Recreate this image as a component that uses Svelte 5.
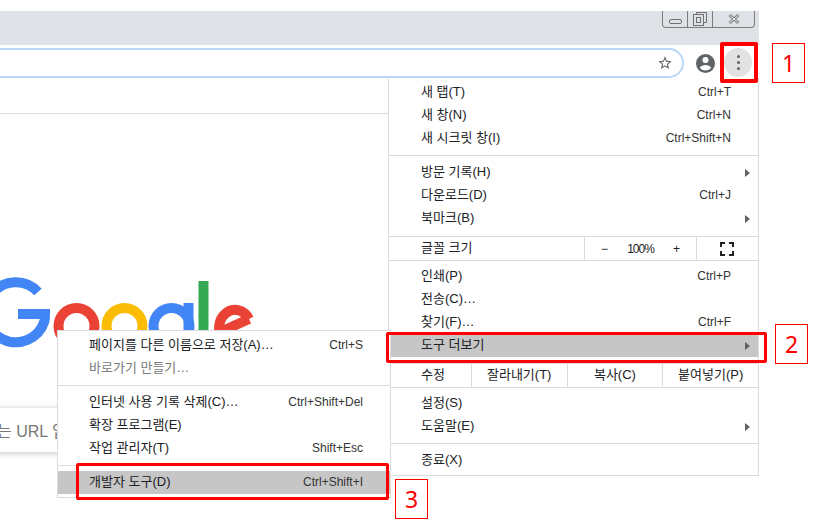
<script lang="ts">
  const mainMenu = [
    { rows: [
      { label: '새 탭(T)', accel: 'Ctrl+T' },
      { label: '새 창(N)', accel: 'Ctrl+N' },
      { label: '새 시크릿 창(I)', accel: 'Ctrl+Shift+N' },
    ] },
    { rows: [
      { label: '방문 기록(H)', more: true },
      { label: '다운로드(D)', accel: 'Ctrl+J' },
      { label: '북마크(B)', more: true },
    ] },
    { zoom: true },
    { rows: [
      { label: '인쇄(P)', accel: 'Ctrl+P' },
      { label: '전송(C)…' },
      { label: '찾기(F)…', accel: 'Ctrl+F' },
      { label: '도구 더보기', more: true, active: true },
    ] },
    { edit: ['잘라내기(T)', '복사(C)', '붙여넣기(P)'] },
    { rows: [
      { label: '설정(S)' },
      { label: '도움말(E)', more: true },
    ] },
    { rows: [{ label: '종료(X)' }] },
  ];

  const subMenu = [
    [
      { label: '페이지를 다른 이름으로 저장(A)…', accel: 'Ctrl+S' },
      { label: '바로가기 만들기…', disabled: true },
    ],
    [
      { label: '인터넷 사용 기록 삭제(C)…', accel: 'Ctrl+Shift+Del' },
      { label: '확장 프로그램(E)' },
      { label: '작업 관리자(T)', accel: 'Shift+Esc' },
    ],
    [{ label: '개발자 도구(D)', accel: 'Ctrl+Shift+I', active: true }],
  ];

  const isStrip = (group) => group.zoom || group.edit;
</script>

{#snippet row(item)}
  <div class="row" class:active={item.active} class:disabled={item.disabled}>
    <span class="label">{item.label}</span>
    {#if item.accel}<span class="accel">{item.accel}</span>{/if}
    {#if item.more}<span class="arrow"></span>{/if}
  </div>
{/snippet}

<div class="window">
  <div class="titlebar">
    <div class="caption">
      <span class="cap min"><svg width="13" height="5" viewBox="0 0 13 5"><rect x="0.5" y="0.5" width="12" height="4" rx="1.5" fill="none" stroke="#6f6f6f"/></svg></span>
      <span class="cap restore"><svg width="14" height="14" viewBox="0 0 14 14"><path d="M3.500 2.500v-2h10v10h-3" fill="none" stroke="#6f6f6f"/><rect x="0.500" y="2.500" width="10" height="11" fill="none" stroke="#6f6f6f"/><rect x="3.500" y="5.500" width="4" height="5" fill="none" stroke="#6f6f6f"/></svg></span>
      <span class="cap close"><svg width="12" height="10" viewBox="0 0 12 10"><path d="M1.500 1l9 8M10.500 1l-9 8" stroke="#7f7f7f" stroke-width="3" fill="none"/><path d="M1.500 1l9 8M10.500 1l-9 8" stroke="#eceef0" stroke-width="1" fill="none"/></svg></span>
    </div>
  </div>

  <div class="toolbar">
    <div class="omnibox">
      <svg class="star" width="16" height="16" viewBox="0 0 24 24"><path d="M22 9.240l-7.190-.620L12 2 9.190 8.630 2 9.240l5.460 4.730L5.820 21 12 17.270 18.180 21l-1.630-7.030L22 9.240zM12 15.400l-3.760 2.270 1-4.280-3.320-2.880 4.380-.380L12 6.100l1.710 4.040 4.380.380-3.320 2.880 1 4.280L12 15.400z" fill="#5f6368"/></svg>
    </div>
    <svg class="avatar" width="19" height="19" viewBox="0 0 20 20"><path fill-rule="evenodd" d="M10 0a10 10 0 1 0 0 20 10 10 0 0 0 0-20zm0 3.200a3.200 3.200 0 1 1 0 6.400 3.200 3.200 0 0 1 0-6.400zM10 17.400a7.600 7.600 0 0 1-6-3c.900-1.800 4-2.700 6-2.700s5.100.900 6 2.700a7.600 7.600 0 0 1-6 3z" fill="#5f6368"/></svg>
    <div class="kebab"><i></i><i></i><i></i></div>
  </div>

  <div class="page">
    <div class="page-head"></div>
    <svg class="logo" width="270" height="100" viewBox="0 0 270 100">
      <g fill="none" stroke-width="10">
        <path d="M38 15a30 30 0 1 0 6.500 29c.500-2 .500-4.500.500-7H18" stroke="#4285f4"/>
        <circle cx="76.500" cy="49" r="18" stroke="#ea4335"/>
        <circle cx="124.500" cy="49" r="18" stroke="#fbbc05"/>
        <circle cx="171.500" cy="49" r="18" stroke="#4285f4"/>
        <path d="M188.500 26v50" stroke="#4285f4"/>
        <path d="M203.500 4v70" stroke="#34a853"/>
        <path d="M249 42A16 18 0 1 0 246 64" stroke="#ea4335"/>
        <path d="M218 56l31-14" stroke="#ea4335"/>
      </g>
    </svg>
    <div class="searchbox"><span>는 URL 입력</span></div>
  </div>

  <div class="menu main">
    {#each mainMenu as group, i}
      {#if i > 0}
        <div class="sep" class:before-strip={isStrip(group)} class:after-strip={isStrip(mainMenu[i - 1])}></div>
      {/if}
      {#if group.zoom}
        <div class="strip">
          <span class="label strip-label">글꼴 크기</span>
          <div class="zoom-ctl">
            <span>−</span><span class="pct">100%</span><span>+</span>
          </div>
          <div class="fullscreen">
            <svg width="14" height="14" viewBox="0 0 14 14"><path d="M1 5V1h4M9 1h4v4M13 9v4H9M5 13H1V9" fill="none" stroke="#222" stroke-width="2"/></svg>
          </div>
        </div>
      {:else if group.edit}
        <div class="strip edit">
          <span class="label strip-label">수정</span>
          {#each group.edit as cmd}<span class="label cmd">{cmd}</span>{/each}
        </div>
      {:else}
        <div class="group">
          {#each group.rows as item}{@render row(item)}{/each}
        </div>
      {/if}
    {/each}
  </div>

  <div class="menu sub">
    {#each subMenu as group, i}
      {#if i > 0}<div class="sep"></div>{/if}
      <div class="group">
        {#each group as item}{@render row(item)}{/each}
      </div>
    {/each}
  </div>

  <div class="mark mark-1"></div>
  <div class="mark mark-2"></div>
  <div class="mark mark-3"></div>
  <div class="tag tag-1">1</div>
  <div class="tag tag-2">2</div>
  <div class="tag tag-3">3</div>
</div>

<style>
  :global(body) {
    margin: 0;
    background: #fff;
  }

  .window {
    position: relative;
    width: 813px;
    height: 527px;
    padding-top: 11px;
    box-sizing: border-box;
    overflow: hidden;
    font-family: "Liberation Sans", "Noto Sans CJK KR", sans-serif;
    font-size: 12px;
    color: #202124;
  }

  .titlebar {
    width: 759px;
    height: 34px;
    background: #dee1e6;
    display: flex;
    justify-content: flex-end;
  }

  .caption {
    display: flex;
    height: 16px;
    margin-right: 4px;
    border: 1px solid #7c7c7c;
    border-top: 0;
    border-radius: 0 0 4px 4px;
  }

  .cap {
    display: flex;
    align-items: center;
    justify-content: center;
  }

  .min {
    width: 24px;
    border-right: 1px solid #7c7c7c;
    padding-top: 5px;
    box-sizing: content-box;
  }

  .restore {
    width: 24px;
    border-right: 1px solid #7c7c7c;
  }

  .close {
    width: 41px;
  }

  .toolbar {
    width: 759px;
    height: 33px;
    box-sizing: border-box;
    padding-top: 3px;
    display: flex;
    align-items: flex-start;
  }

  .omnibox {
    box-sizing: border-box;
    flex: none;
    width: 704px;
    height: 30px;
    margin-left: -20px;
    border: 2px solid #bad6f8;
    border-radius: 15px;
    display: flex;
    align-items: center;
    justify-content: flex-end;
    padding-right: 9px;
  }

  .avatar {
    flex: none;
    margin: 6px 0 0 12px;
  }

  .kebab {
    flex: none;
    width: 28px;
    height: 29px;
    margin-left: 9px;
    border-radius: 50%;
    background: #e2e2e2;
    display: flex;
    flex-direction: column;
    align-items: center;
    justify-content: center;
    gap: 3px;
  }

  .kebab i {
    width: 3px;
    height: 3px;
    border-radius: 50%;
    background: #5f6368;
  }

  .page {
    width: 388px;
  }

  .page-head {
    height: 35px;
    border-bottom: 1px solid #ddd;
  }

  .logo {
    display: block;
    margin-top: 163px;
  }

  .searchbox {
    box-sizing: border-box;
    width: 100px;
    height: 44px;
    margin: 31px 0 0 -30px;
    padding-left: 27px;
    display: flex;
    align-items: center;
    background: #fff;
    border-radius: 0 0 2px 2px;
    box-shadow: 0 1px 6px rgba(32, 33, 36, 0.28);
    font-size: 16px;
    color: #777;
    white-space: nowrap;
    overflow: hidden;
  }

  .menu {
    position: absolute;
    box-sizing: border-box;
    background: #fff;
    border: 1px solid #dadce0;
    padding: 3px 0;
  }

  .main {
    left: 388px;
    top: 78px;
    width: 371px;
    height: 398px;
    border-top: 0;
  }

  .sub {
    left: 57px;
    top: 330px;
    width: 334px;
    height: 168px;
  }

  .label {
    font-size: 13px;
    line-height: 20px;
    padding-bottom: 1px;
  }

  .row {
    height: 23px;
    display: flex;
    align-items: center;
    justify-content: space-between;
    padding: 0 27px 0 32px;
    position: relative;
  }

  .sub .row {
    padding-left: 31px;
  }

  .sep {
    height: 1px;
    margin: 5px 0;
    background: #dadce0;
  }

  .sep.before-strip {
    margin: 6px 0 0;
  }

  .sep.after-strip {
    margin: 0 0 4px;
  }

  .accel {
    color: #333;
    padding-bottom: 1px;
  }

  .disabled {
    color: #7a7a7a;
  }

  .active {
    background: #c6c6c6;
  }

  .arrow {
    position: absolute;
    right: 8px;
    top: 8px;
    border-left: 5px solid #5f6368;
    border-top: 4px solid transparent;
    border-bottom: 4px solid transparent;
  }

  .strip {
    height: 23px;
    display: flex;
    align-items: stretch;
  }

  .strip > * {
    display: flex;
    align-items: center;
    justify-content: center;
  }

  .strip-label {
    width: 195px;
    justify-content: flex-start;
    padding-left: 32px;
    box-sizing: border-box;
  }

  .zoom-ctl {
    width: 113px;
    border-left: 1px solid #dadce0;
    border-right: 1px solid #dadce0;
    justify-content: space-between;
    padding: 0 16px;
    box-sizing: border-box;
  }

  .pct {
    letter-spacing: -1px;
  }

  .fullscreen {
    flex: 1;
    padding-right: 2px;
  }

  .edit .strip-label {
    width: 82px;
  }

  .cmd {
    width: 96px;
    border-left: 1px solid #dadce0;
    box-sizing: border-box;
  }

  .mark {
    position: absolute;
    box-sizing: border-box;
    border: 3px solid #f00;
    border-radius: 2px;
  }

  .mark-1 {
    left: 720px;
    top: 42px;
    width: 38px;
    height: 41px;
    border-width: 4px;
  }

  .mark-2 {
    left: 386px;
    top: 332px;
    width: 381px;
    height: 31px;
  }

  .mark-3 {
    left: 76px;
    top: 463px;
    width: 313px;
    height: 37px;
  }

  .tag {
    position: absolute;
    box-sizing: border-box;
    width: 33px;
    height: 40px;
    border: 1px solid #f00;
    color: #f00;
    font-family: "Noto Sans", sans-serif;
    font-size: 23px;
    display: flex;
    align-items: center;
    justify-content: center;
  }

  .tag-1 { left: 772px; top: 43px; }
  .tag-2 { left: 775px; top: 324px; }
  .tag-3 { left: 395px; top: 479px; }
</style>
